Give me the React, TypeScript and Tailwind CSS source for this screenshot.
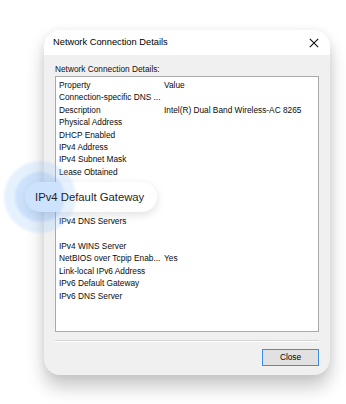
const rows: [string, string][] = [
  ["Property", "Value"],
  ["Connection-specific DNS ...", ""],
  ["Description", "Intel(R) Dual Band Wireless-AC 8265"],
  ["Physical Address", ""],
  ["DHCP Enabled", ""],
  ["IPv4 Address", ""],
  ["IPv4 Subnet Mask", ""],
  ["Lease Obtained", ""],
  ["Lease Expires", ""],
  ["IPv4 Default Gateway", ""],
  ["IPv4 DHCP Server", ""],
  ["IPv4 DNS Servers", ""],
  ["", ""],
  ["IPv4 WINS Server", ""],
  ["NetBIOS over Tcpip Enab...", "Yes"],
  ["Link-local IPv6 Address", ""],
  ["IPv6 Default Gateway", ""],
  ["IPv6 DNS Server", ""],
];

// rows hidden behind the callout in the picture
const hidden = new Set(["Lease Expires", "IPv4 Default Gateway", "IPv4 DHCP Server"]);

const App = () => {
  return (
    <div
      className="relative w-[346px] h-[404px] bg-white overflow-hidden"
      style={{ fontFamily: '"Liberation Sans", Arial, sans-serif' }}
    >
      <div className="pt-[30px] pl-[44px]">
        <div className="flex flex-col w-[286px] h-[345px] rounded-[16px] overflow-hidden bg-[#f0f0f0] shadow-[0_12px_18px_rgba(0,0,0,0.22),0_0_8px_rgba(0,0,0,0.06)]">
          <div className="flex items-center justify-between h-[25px] bg-white pl-[9px] pr-[11px]">
            <span className="text-[9.3px] text-black">Network Connection Details</span>
            <svg width="10" height="10" viewBox="0 0 10 10" className="text-[#111]">
              <path d="M0.8 0.8 L9.2 9.2 M9.2 0.8 L0.8 9.2" stroke="currentColor" strokeWidth="1.1" />
            </svg>
          </div>
          <div className="flex flex-col flex-1 px-[11px] pt-[9px]">
            <div className="text-[8.3px] leading-[10px] text-[#111] mb-[2px]">
              Network Connection Details:
            </div>
            <div className="h-[256px] bg-white border border-[#a9a9a9] pt-[2px] pl-[3px]">
              {rows.map(([k, v], i) => (
                <div key={i} className="flex h-[12.4px] items-center text-[8.3px] text-[#0a0a0a] whitespace-nowrap">
                  <span className="w-[105px]">{hidden.has(k) ? "" : k}</span>
                  <span>{v}</span>
                </div>
              ))}
            </div>
            <div className="mt-[8px] h-[2px] border-t border-[#d5d5d5] border-b border-b-white" />
            <div className="flex justify-end mt-[7px]">
              <button className="w-[57px] h-[17px] bg-[#e1e1e1] border border-[#3a8ee6] text-[8.3px] text-black flex items-center justify-center">
                Close
              </button>
            </div>
          </div>
        </div>
      </div>

      {/* callout over the gateway row */}
      <div className="absolute left-[25px] top-[182px] w-[132px] h-[30px] rounded-full bg-white shadow-[0_3px_10px_rgba(0,0,0,0.12)]" />
      <div className="absolute left-[4px] top-[161px] w-[72px] h-[72px] rounded-full bg-[rgba(160,200,250,0.26)] blur-[1px]" />
      <div className="absolute left-[15px] top-[172px] w-[50px] h-[50px] rounded-full bg-[rgba(120,175,245,0.22)] blur-[1px]" />
      <div className="absolute left-[35px] top-[182px] h-[30px] flex items-center text-[11.3px] text-[#1f1f1f] whitespace-nowrap">
        IPv4 Default Gateway
      </div>
    </div>
  );
};

export default App;
